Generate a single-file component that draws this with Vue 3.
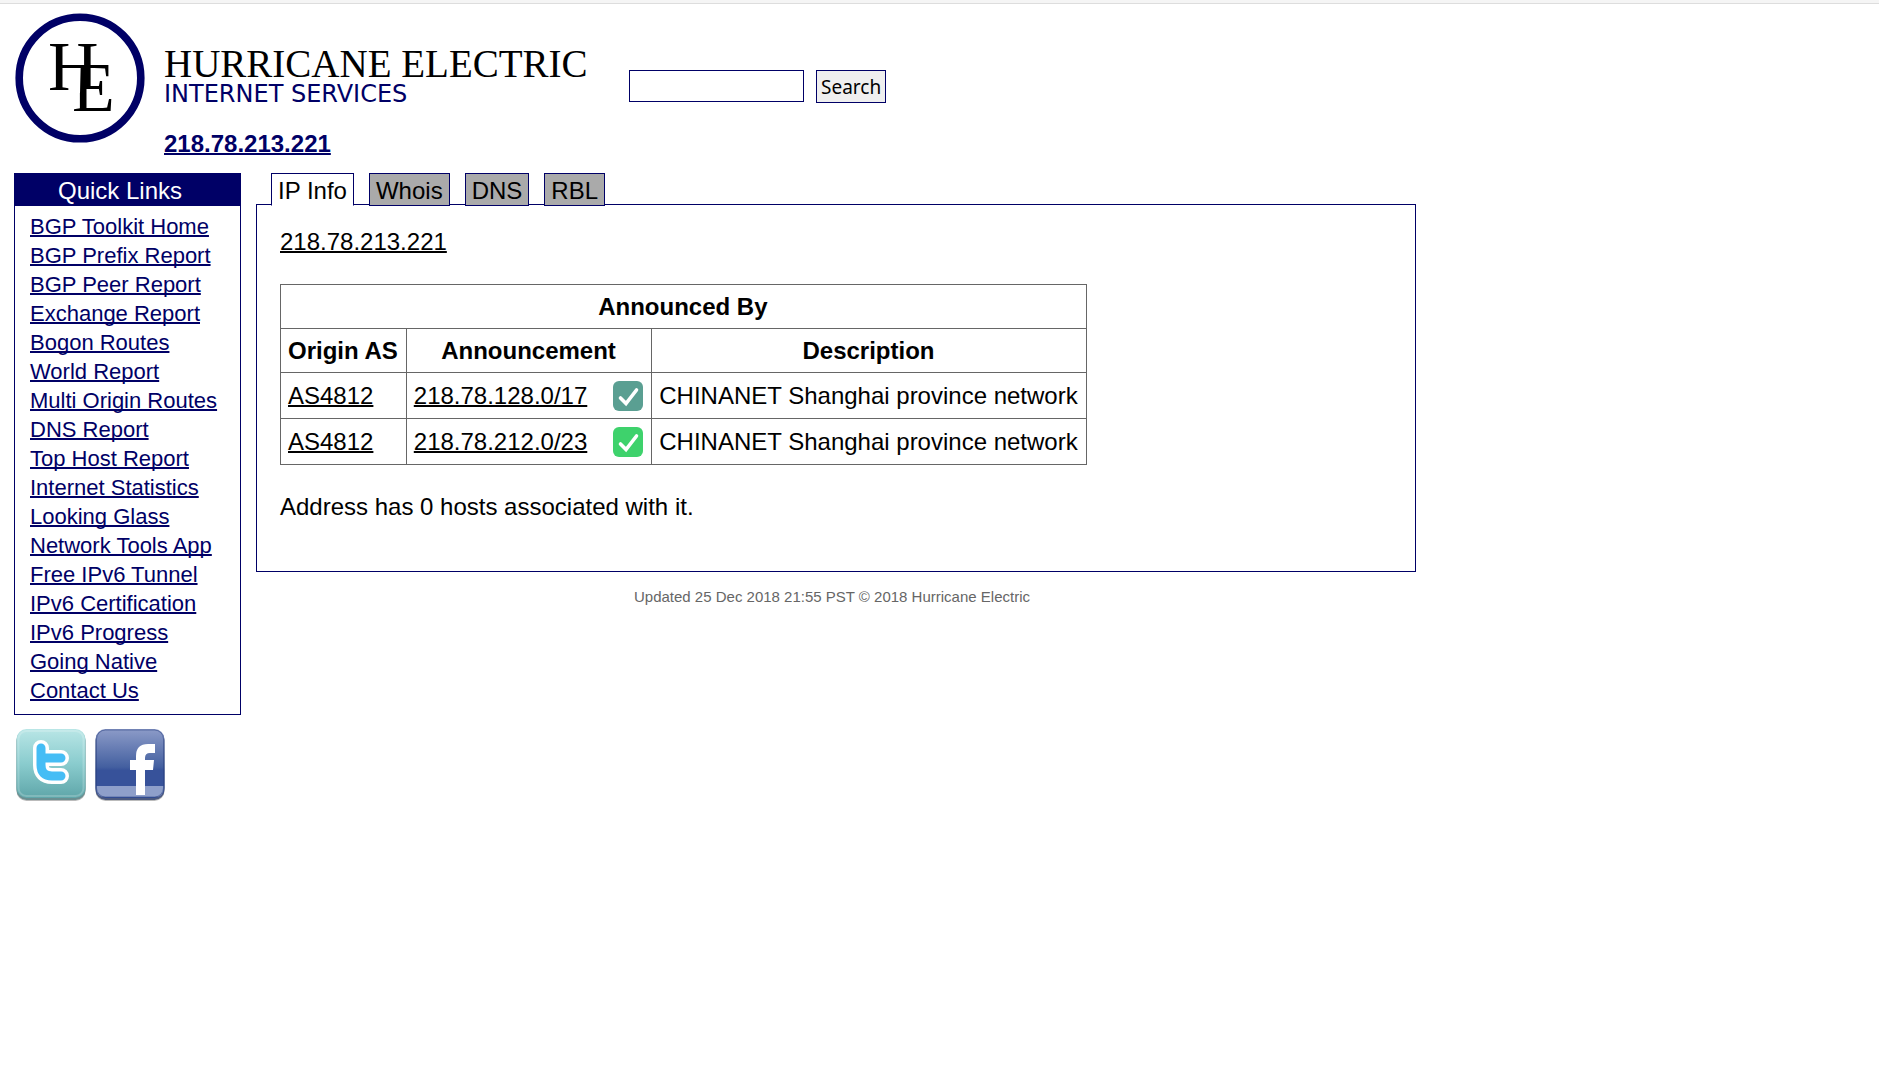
<template>
  <div class="page">
    <header class="header">
      <svg class="emblem" viewBox="0 0 132 132" role="img" aria-label="HE">
        <!-- the right foot of the H and the top left serif of the E are cut, so both share one stem -->
        <clipPath id="h-cut">
          <path d="M0 0H132V73H60V90H0Z" />
        </clipPath>
        <clipPath id="e-cut">
          <path d="M68 0H132V132H0V80H66Z" />
        </clipPath>
        <circle cx="66" cy="65" r="60.8" fill="#fff" stroke="#006" stroke-width="7.6" />
        <text x="34" y="76.5" clip-path="url(#h-cut)">H</text>
        <text x="58" y="97.5" clip-path="url(#e-cut)">E</text>
      </svg>
      <div class="brand">
        <div class="brand-name">HURRICANE ELECTRIC</div>
        <div class="brand-sub">INTERNET SERVICES</div>
        <h1 class="title"><a href="#">{{ ip }}</a></h1>
      </div>
      <form class="search" @submit.prevent>
        <input v-model="query" type="text" aria-label="Search" />
        <button type="submit">Search</button>
      </form>
    </header>

    <div class="columns">
      <aside class="sidebar">
        <nav class="quick-links">
          <h2>Quick Links</h2>
          <ul>
            <li v-for="link in links" :key="link"><a href="#">{{ link }}</a></li>
          </ul>
        </nav>
        <div class="social">
          <a href="#" aria-label="Twitter">
            <svg viewBox="0 0 70 74">
              <defs>
                <linearGradient id="tw" x1="0" y1="0" x2="0" y2="1">
                  <stop offset="0" stop-color="#b9e6e6" />
                  <stop offset="0.5" stop-color="#8accce" />
                  <stop offset="1" stop-color="#5fa6a9" />
                </linearGradient>
              </defs>
              <rect x="0.5" y="3" width="69" height="70" rx="10" fill="#bbb" />
              <rect x="0.5" y="2" width="69" height="70" rx="10" fill="#6b8f91" />
              <rect x="0.5" y="1" width="69" height="69" rx="10" fill="url(#tw)" />
              <rect x="2.5" y="3" width="65" height="65" rx="8" fill="none" stroke="#fff" stroke-opacity="0.2" stroke-width="2" />
              <g fill="none" stroke-linecap="round" stroke-linejoin="round">
                <path class="t-edge" d="M25 20V37Q25 48 36 48H45M25 30H45" />
                <path class="t-fill" d="M25 20V37Q25 48 36 48H45M25 30H45" />
              </g>
            </svg>
          </a>
          <a href="#" aria-label="Facebook">
            <svg viewBox="0 0 70 74">
              <defs>
                <linearGradient id="fb" x1="0" y1="0" x2="0" y2="1">
                  <stop offset="0" stop-color="#8c9bc8" />
                  <stop offset="0.55" stop-color="#4460a0" />
                  <stop offset="0.6" stop-color="#37529a" />
                  <stop offset="1" stop-color="#37529a" />
                </linearGradient>
              </defs>
              <rect x="0.5" y="3" width="69" height="70" rx="10" fill="#bbb" />
              <rect x="0.5" y="2" width="69" height="70" rx="10" fill="#4c5a80" />
              <rect x="0.5" y="1" width="69" height="69" rx="10" fill="url(#fb)" />
              <path d="M1.5 58H68.5V60Q68.5 69 60 69H10Q1.5 69 1.5 60Z" fill="#8e9fca" />
              <rect x="1.5" y="2" width="67" height="67" rx="9" fill="none" stroke="#263c7c" stroke-opacity="0.5" />
              <path d="M41 67V42H35V32H41V28Q41 16 53 16H60V25H55Q50 25 50 30V32H59L58 42H50V67Z" fill="#fff" />
            </svg>
          </a>
        </div>
      </aside>

      <main class="content">
        <div class="tabs" role="tablist">
          <button
            v-for="tab in tabs"
            :key="tab"
            type="button"
            role="tab"
            class="tab"
            :class="{ active: tab === activeTab }"
            :aria-selected="tab === activeTab"
            @click="activeTab = tab"
          >{{ tab }}</button>
        </div>
        <div class="panel">
          <p><a href="#">{{ ip }}</a></p>
          <table>
            <thead>
              <tr>
                <th colspan="3">Announced By</th>
              </tr>
              <tr>
                <th>Origin AS</th>
                <th>Announcement</th>
                <th>Description</th>
              </tr>
            </thead>
            <tbody>
              <tr v-for="row in rows" :key="row.prefix">
                <td><a href="#">{{ row.origin }}</a></td>
                <td>
                  <div class="announcement">
                    <a href="#">{{ row.prefix }}</a>
                    <svg class="check" :class="row.status" viewBox="0 0 30 30">
                      <rect width="30" height="30" rx="6" />
                      <path d="M7.5 17L13 22.5L23.5 9" />
                    </svg>
                  </div>
                </td>
                <td>{{ row.description }}</td>
              </tr>
            </tbody>
          </table>
          <p>Address has 0 hosts associated with it.</p>
        </div>
        <footer class="footer">Updated 25 Dec 2018 21:55 PST © 2018 Hurricane Electric</footer>
      </main>
    </div>
  </div>
</template>

<script setup>
import { ref } from "vue";

const ip = "218.78.213.221";
const query = ref("");
const activeTab = ref("IP Info");

const tabs = ["IP Info", "Whois", "DNS", "RBL"];

const links = [
  "BGP Toolkit Home",
  "BGP Prefix Report",
  "BGP Peer Report",
  "Exchange Report",
  "Bogon Routes",
  "World Report",
  "Multi Origin Routes",
  "DNS Report",
  "Top Host Report",
  "Internet Statistics",
  "Looking Glass",
  "Network Tools App",
  "Free IPv6 Tunnel",
  "IPv6 Certification",
  "IPv6 Progress",
  "Going Native",
  "Contact Us",
];

const rows = [
  {
    origin: "AS4812",
    prefix: "218.78.128.0/17",
    status: "parent",
    description: "CHINANET Shanghai province network",
  },
  {
    origin: "AS4812",
    prefix: "218.78.212.0/23",
    status: "valid",
    description: "CHINANET Shanghai province network",
  },
];
</script>

<style>
body {
  background: #fff;
}
</style>

<style scoped>
* {
  box-sizing: border-box;
}

.page {
  border-top: 3px solid #f5f5f5;
  font-family: "Liberation Sans", Arial, sans-serif;
  font-size: 24px;
  line-height: 30px;
  color: #000;
}

a {
  color: inherit;
  text-decoration-thickness: 2px;
  text-decoration-skip-ink: none;
}

h1,
h2,
p,
ul {
  margin: 0;
  padding: 0;
}

/* Header */
.header {
  display: flex;
  align-items: flex-start;
  padding: 0 14px 14px;
  border-top: 1px solid #ddd;
}

.emblem {
  width: 132px;
  height: 132px;
  margin-top: 9px;
}

.emblem text {
  font-family: "Liberation Serif", "Times New Roman", serif;
  font-size: 70px;
}

.brand {
  width: 426px;
  padding-top: 42px;
  margin-left: 18px;
  white-space: nowrap;
}

.brand-name {
  font-family: "Liberation Serif", "Times New Roman", serif;
  font-size: 39px;
  line-height: 35px;
}

.brand-sub {
  font-family: "DejaVu Sans", Verdana, sans-serif;
  line-height: 26px;
  color: #006;
}

.title {
  margin-top: 22px;
  font-size: 24px;
  line-height: 30px;
  color: #006;
}

.search {
  display: flex;
  align-items: flex-start;
  gap: 12px;
  padding-top: 66px;
  margin-left: 39px;
}

.search input {
  width: 175px;
  height: 32px;
  padding: 0 4px;
  border: 1px solid #006;
  font: inherit;
  font-size: 19px;
}

.search button {
  height: 33px;
  padding: 0 4px;
  border: 1px solid #006;
  background: #efefef;
  font-family: "Noto Sans", Tahoma, sans-serif;
  font-size: 19px;
  line-height: 26px;
  color: #000;
}

/* Columns */
.columns {
  display: flex;
  align-items: flex-start;
  gap: 15px;
  max-width: 1430px;
  padding: 0 14px;
}

.sidebar {
  flex: 0 0 227px;
}

.quick-links {
  border: 1px solid #006;
}

.quick-links h2 {
  padding: 1px 15px 0 0;
  background: #006;
  color: #fff;
  font-size: 24px;
  font-weight: normal;
  line-height: 31px;
  text-align: center;
}

.quick-links ul {
  padding: 6px 0 9px 15px;
  list-style: none;
  font-size: 22px;
  line-height: 29px;
  color: #006;
}

.social {
  display: flex;
  gap: 9px;
  padding: 13px 2px;
}

.social svg {
  display: block;
  width: 70px;
  height: 74px;
}

.t-edge {
  stroke: #fff;
  stroke-width: 16px;
}

.t-fill {
  stroke: #45bdf5;
  stroke-width: 9px;
}

/* Tabs */
.content {
  flex: 1;
  min-width: 0;
}

.tabs {
  position: relative;
  display: flex;
  gap: 15px;
  margin-bottom: -2px;
  padding-left: 15px;
}

.tab {
  height: 33px;
  padding: 2px 6px 0;
  border: 1px solid #006;
  background: #aaa;
  font: inherit;
  line-height: 29px;
  color: #000;
  cursor: pointer;
}

.tab.active {
  border-bottom-color: #fff;
  background: #fff;
}

.panel {
  padding: 22px 23px 49px;
  border: 1px solid #006;
}

/* Announcements */
table {
  margin: 27px 0;
  border-collapse: collapse;
}

th,
td {
  padding: 7px 8px 7px 7px;
  border: 1px solid #666;
  line-height: 29px;
  text-align: left;
}

th {
  text-align: center;
}

td {
  line-height: 31px;
}

.announcement {
  display: flex;
  align-items: center;
  gap: 26px;
}

.check {
  width: 30px;
  height: 30px;
}

.check path {
  fill: none;
  stroke: #fff;
  stroke-width: 3.6px;
  stroke-linecap: round;
}

.check.parent {
  fill: #5a9f92;
}

.check.valid {
  fill: #3ed26c;
}

.footer {
  padding: 10px 8px 10px 0;
  font-size: 15px;
  color: #666;
  text-align: center;
}
</style>
